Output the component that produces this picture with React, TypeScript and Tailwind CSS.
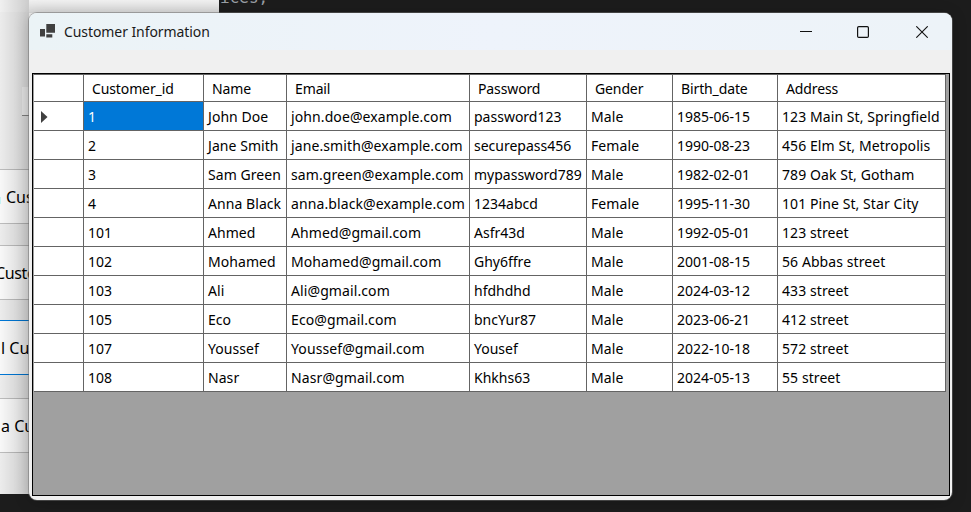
const columns = ['Customer_id', 'Name', 'Email', 'Password', 'Gender', 'Birth_date', 'Address'];

const rows = [
  ['1', 'John Doe', 'john.doe@example.com', 'password123', 'Male', '1985-06-15', '123 Main St, Springfield'],
  ['2', 'Jane Smith', 'jane.smith@example.com', 'securepass456', 'Female', '1990-08-23', '456 Elm St, Metropolis'],
  ['3', 'Sam Green', 'sam.green@example.com', 'mypassword789', 'Male', '1982-02-01', '789 Oak St, Gotham'],
  ['4', 'Anna Black', 'anna.black@example.com', '1234abcd', 'Female', '1995-11-30', '101 Pine St, Star City'],
  ['101', 'Ahmed', 'Ahmed@gmail.com', 'Asfr43d', 'Male', '1992-05-01', '123 street'],
  ['102', 'Mohamed', 'Mohamed@gmail.com', 'Ghy6ffre', 'Male', '2001-08-15', '56 Abbas street'],
  ['103', 'Ali', 'Ali@gmail.com', 'hfdhdhd', 'Male', '2024-03-12', '433 street'],
  ['105', 'Eco', 'Eco@gmail.com', 'bncYur87', 'Male', '2023-06-21', '412 street'],
  ['107', 'Youssef', 'Youssef@gmail.com', 'Yousef', 'Male', '2022-10-18', '572 street'],
  ['108', 'Nasr', 'Nasr@gmail.com', 'Khkhs63', 'Male', '2024-05-13', '55 street'],
];

const tracking = ['', 'tracking-[0.06px]', 'tracking-[0.1px]', '', 'tracking-[0.1px]', '', 'tracking-[0.08px]'];

const gridCols = 'grid grid-cols-[50px_120px_83px_183px_117px_86px_105px_168px]';
const line = 'border-r border-b border-[#646464]';

function BackButton({ label, className }: { label: string; className: string }) {
  return (
    <div className={`flex h-[55px] w-[60px] shrink-0 items-center border-y bg-[#f8f8f8] text-[16px] whitespace-pre ${className}`}>
      {label}
    </div>
  );
}

function BackWindow() {
  return (
    <div className="absolute top-0 left-0 h-[494px] w-[219px] overflow-hidden bg-[#ececec]">
      <div className="h-3 bg-[#f0f0f0]" />
      <div className="mt-[75px] ml-[22px] h-[29px] w-20 border-b border-[#8a8a8a] bg-[#fafafa]" />
      <div className="mt-[53px] flex flex-col">
        <BackButton label="Cust" className="border-[#bcbcbc] pl-[6px]" />
        <BackButton label="Custo" className="mt-[21px] -ml-[5px] border-[#bcbcbc] tracking-[-0.35px]" />
        <BackButton label="l Cus" className="mt-5 border-[#0078d7] pl-px" />
        <BackButton label="a Cus" className="mt-[23px] border-[#bcbcbc] pl-px" />
      </div>
      <div className="absolute top-[197px] left-0 h-[7px] w-px bg-[#c5f3f5]" />
      <div className="absolute inset-y-0 left-0 w-[29px] bg-linear-to-r from-transparent to-black/15" />
      <div className="absolute top-0 right-0 left-[29px] h-[13px] bg-linear-to-b from-transparent to-black/10" />
    </div>
  );
}

function TitleBar() {
  return (
    <div className="flex h-[37px] items-center bg-linear-to-r from-[#ebf3f6] via-[#eef3fb] to-[#edf3f8] pr-[24px] pl-[11px]">
      <svg width="16" height="15" viewBox="0 0 16 15" className="mr-2 shrink-0" fill="#404040">
        <path d="M0 5h5v7.5H0zM6.3 0H15v8.8H6.3zM6.3 10.3h6v3.2h-6z" />
      </svg>
      <span className="text-[14px] tracking-[-0.08px] text-[#1a1a1a]">Customer Information</span>
      <div className="ml-auto flex items-center gap-[46px] text-[#111]">
        <svg width="12" height="12" viewBox="0 0 12 12" stroke="currentColor" fill="none" className="-mr-px"><path d="M0 5.5h12" /></svg>
        <svg width="12" height="12" viewBox="0 0 12 12" stroke="currentColor" fill="none" strokeWidth="1.2"><rect x=".6" y=".6" width="10.8" height="10.8" rx="1.2" /></svg>
        <svg width="12" height="12" viewBox="0 0 12 12" stroke="currentColor" fill="none" strokeWidth="1.1" className="ml-px"><path d="M.3.3l11.4 11.4M11.7.3L.3 11.7" /></svg>
      </div>
    </div>
  );
}

function DataGrid() {
  return (
    <div className="mx-[3px] mt-[23px] h-[423px] w-[918px] border border-black bg-[#a0a0a0] text-[14px] leading-[20px]">
      <div className="w-[913px] border-t border-l border-t-[#646464] border-l-[#a0a0a0] bg-white">
        <div className={`${gridCols} h-[27px] tracking-[-0.12px]`}>
          <div className={line} />
          {columns.map((c) => (
            <div key={c} className={`${line} flex items-center pt-[2px] pl-2`}>{c}</div>
          ))}
        </div>
        {rows.map((row, i) => (
          <div key={row[0]} className={`${gridCols} h-[29px]`}>
            <div className={`${line} flex items-center pt-[2px] pl-[7px]`}>
              {i === 0 && (
                <svg width="7" height="12" viewBox="0 0 7 12" fill="#404040"><path d="M0 0l6.5 6L0 12z" /></svg>
              )}
            </div>
            {row.map((cell, j) => (
              <div key={j} className={`${line} ${tracking[j]} flex items-center pt-[2px] pl-1 whitespace-nowrap ${i === 0 && j === 0 ? 'bg-[#0078d7] text-white' : ''}`}>
                {cell}
              </div>
            ))}
          </div>
        ))}
      </div>
    </div>
  );
}

export default function App() {
  return (
    <div className="relative h-[512px] w-[971px] overflow-hidden bg-[#1c1c1c] font-['Noto_Sans',sans-serif] text-black">
      <div className="absolute top-[-12px] left-[220px] font-['DejaVu_Sans_Mono',monospace] text-[16px] leading-[20px] text-[#9a9fa5]">ices;</div>
      <BackWindow />
      <div className="absolute top-[13px] left-[29px] h-[487px] w-[923px] overflow-hidden rounded-[8px] bg-[#f0f0f0] shadow-[0_0_0_1px_rgba(110,110,110,0.5),0_2px_16px_rgba(0,0,0,0.2)]">
        <TitleBar />
        <DataGrid />
      </div>
    </div>
  );
}
